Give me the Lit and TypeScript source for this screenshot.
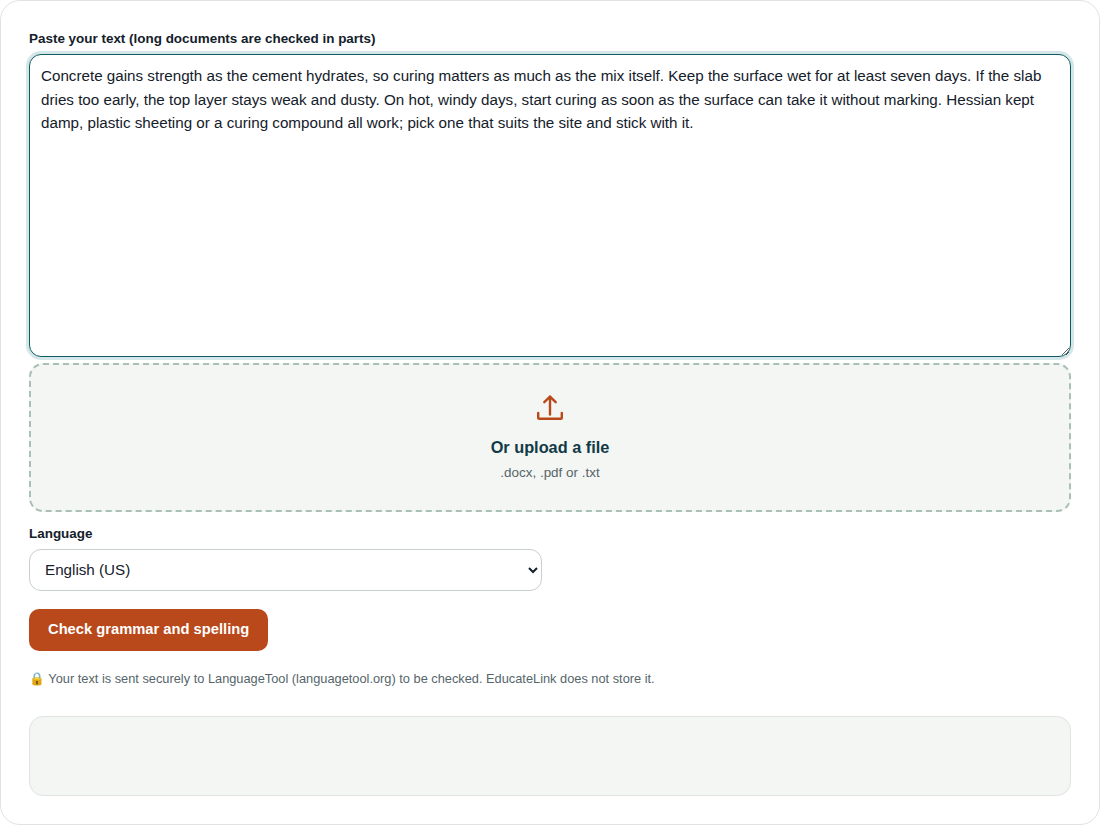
import { LitElement, html, css } from "lit";
import { customElement } from "lit/decorators.js";

const TEXT = "Concrete gains strength as the cement hydrates, so curing matters as much as the mix itself. Keep the surface wet for at least seven days. If the slab dries too early, the top layer stays weak and dusty. On hot, windy days, start curing as soon as the surface can take it without marking. Hessian kept damp, plastic sheeting or a curing compound all work; pick one that suits the site and stick with it.";

@customElement("app-root")
export class AppRoot extends LitElement {
  static styles = css`
    :host {
      display: block;
      font-family: "Liberation Sans", Arial, sans-serif;
      color: #14202a;
    }
    * { box-sizing: border-box; }
    .card {
      display: flex;
      flex-direction: column;
      height: 825px;
      padding: 28px;
      background: #fff;
      border: 1px solid #dfe3e2;
      border-radius: 20px;
    }
    .label {
      display: block;
      height: 18px;
      font-size: 13.44px;
      line-height: 20px;
      font-weight: 700;
      color: #14202a;
      margin-bottom: 7px;
    }
    .textarea {
      display: block;
      width: 100%;
      height: 303px;
      padding: 9.2px 11px;
      font: 15.2px/23.56px "Liberation Sans", Arial, sans-serif;
      color: #14202a;
      background: #fff;
      border: 1px solid #0f5c63;
      border-radius: 12px;
      outline: none;
      box-shadow: 0 0 0 3px rgba(15, 118, 130, 0.18);
      resize: vertical;
    }
    .drop {
      display: flex;
      flex-direction: column;
      align-items: center;
      height: 149px;
      margin-top: 6px;
      padding-top: 28px;
      background: #f3f6f3;
      border: 2px dashed #a9c0b6;
      border-radius: 14px;
    }
    .drop svg { display: block; width: 30px; height: 30px; color: #b9481a; }
    .drop-title {
      margin-top: 13px;
      font-size: 16.32px;
      line-height: 22px;
      font-weight: 700;
      color: #123a46;
    }
    .drop-sub {
      margin-top: 6px;
      font-size: 13.44px;
      line-height: 18px;
      color: #56656a;
    }
    .lang { margin-top: 12px; margin-bottom: 7px; }
    .select {
      display: block;
      width: 513px;
      height: 42px;
      padding: 0 11px 1px;
      font: 15.2px "Liberation Sans", Arial, sans-serif;
      color: #14202a;
      background: #fff;
      border: 1px solid #c9cfcd;
      border-radius: 12px;
    }
    .btn {
      align-self: flex-start;
      height: 42px;
      margin-top: 18px;
      padding: 0 19px 2px;
      font: 700 14.72px "Liberation Sans", Arial, sans-serif;
      color: #fff;
      background: #b9481a;
      border: none;
      border-radius: 10px;
    }
    .note {
      margin: 19px 0 0;
      font-size: 12.8px;
      line-height: 18px;
      color: #56656a;
    }
    .result {
      height: 80px;
      margin-top: 28px;
      background: #f3f6f3;
      border: 1px solid #dfe3e2;
      border-radius: 14px;
    }
  `;

  render() {
    return html`
      <div class="card">
        <label class="label" for="t">Paste your text (long documents are checked in parts)</label>
        <textarea id="t" class="textarea" .value=${TEXT}></textarea>
        <div class="drop">
          <svg viewBox="0 0 30 30" fill="none" stroke="currentColor" stroke-width="2.4" stroke-linecap="round" stroke-linejoin="round">
            <path d="M15 21.500V3.700" />
            <path d="M9.300 9.200L15 3.700l5.700 5.500" />
            <path d="M3.200 20v4.800c0 .6.4 1 1 1h21.600c.6 0 1-.4 1-1V20" />
          </svg>
          <div class="drop-title">Or upload a file</div>
          <div class="drop-sub">.docx, .pdf or .txt</div>
        </div>
        <label class="label lang" for="l">Language</label>
        <select id="l" class="select">
          <option>English (US)</option>
          <option>English (UK)</option>
        </select>
        <button class="btn">Check grammar and spelling</button>
        <p class="note">🔒 Your text is sent securely to LanguageTool (languagetool.org) to be checked. EducateLink does not store it.</p>
        <div class="result"></div>
      </div>
    `;
  }
}
